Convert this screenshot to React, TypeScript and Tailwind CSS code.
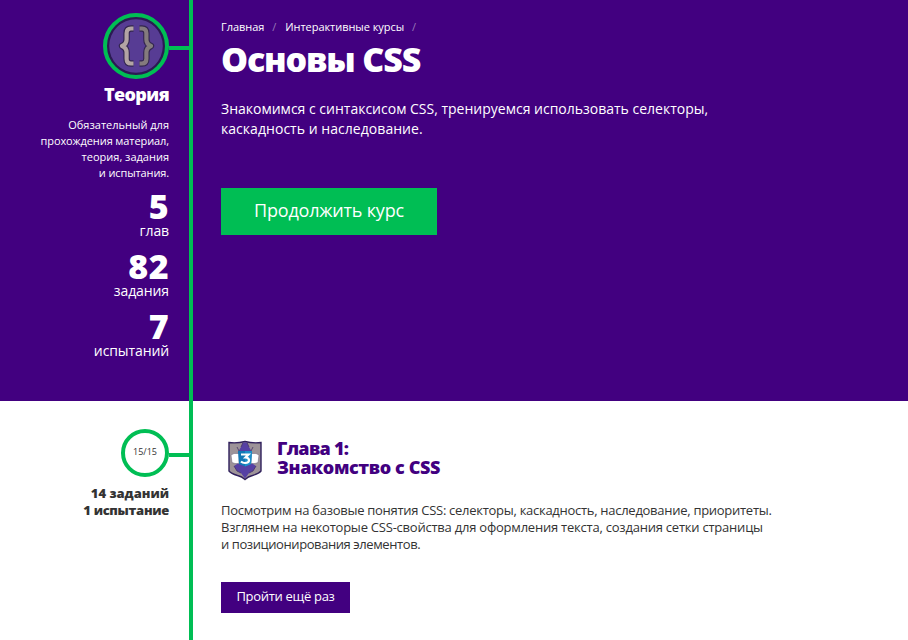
function BracesBadge() {
  return (
    <svg width="66" height="66" viewBox="0 0 66 66" className="block shrink-0">
      <circle cx="33" cy="33" r="31" fill="#2b1a52" stroke="#00be54" strokeWidth="4" />
      <circle cx="33" cy="33" r="26.8" fill="#573c94" />
      <g fill="none" strokeLinejoin="round" transform="translate(.5 0)">
        <g stroke="#33264f" strokeWidth="6.4">
          <path d="M30 15.500h-2.500c-3 0-4.400 1.800-4.400 4.700v6.300c0 3.200-1.700 5.300-4.600 6.500c2.900 1.200 4.600 3.300 4.600 6.500v6.300c0 2.900 1.400 4.700 4.400 4.700h2.500" />
          <path d="M36 15.500h2.500c3 0 4.400 1.800 4.400 4.700v6.300c0 3.200 1.700 5.300 4.600 6.500c-2.900 1.200-4.600 3.300-4.600 6.500v6.300c0 2.900-1.400 4.700-4.400 4.700h-2.500" />
        </g>
        <path stroke="#b3a4a4" strokeWidth="4.2" d="M30 15.500h-2.500c-3 0-4.400 1.800-4.400 4.700v6.300c0 3.200-1.700 5.300-4.600 6.500c2.900 1.200 4.600 3.300 4.600 6.500v6.300c0 2.900 1.400 4.700 4.400 4.700h2.500" />
        <path stroke="#847b7d" strokeWidth="4.2" d="M36 15.500h2.500c3 0 4.400 1.800 4.400 4.700v6.300c0 3.200 1.700 5.300 4.600 6.500c-2.900 1.200-4.600 3.300-4.600 6.500v6.300c0 2.900-1.400 4.700-4.400 4.700h-2.500" />
      </g>
    </svg>
  );
}

function ChapterShield() {
  return (
    <svg width="36" height="42" viewBox="0 0 36 42" className="block shrink-0">
      <path d="M2 3.500Q10 4.500 18 2.500Q26 4.500 34 3.500V32Q32 34.500 25.500 36.500Q21 37.500 18 40.500Q15 37.500 10.500 36.500Q4 34.500 2 32Z" fill="#9d9398" stroke="#30205c" strokeWidth="1.400" />
      <path d="M16 3.500L14 8L11 13L10 25L7 27L10 32L14 34L18 39.500L22 34L26 32L29 27L26 25L25 13L22 8L20 3.500Z" fill="#5640a4" />
      <path d="M16 3.500L14 8M20 3.500L22 8M10 8L12 12M26 8L24 12M7 27L10 32L14 34M29 27L26 32L22 34" fill="none" stroke="#453368" strokeWidth=".8" />
      <path d="M4 16L7 14.500H12V24.500H8L5 23.500ZM32 16L29 14.500H24V24.500H28L31 23.500Z" fill="#fff" stroke="#6b6079" strokeWidth=".5" />
      <path d="M11 12H25L24 25L18 27.500L12 25Z" fill="#1278b5" />
      <path d="M18 12H25L24 25L18 27.500Z" fill="#1e8fca" />
      <path d="M14 15.500H21.500L18.500 18.500Q22 18.500 22 21.300Q22 24 18 24Q15.500 24 14 22.500" fill="none" stroke="#fff" strokeWidth="2.200" />
    </svg>
  );
}

function Stat({ value, label }: { value: string; label: string }) {
  return (
    <div className="h-[60px]">
      <div className="text-[34px] leading-[35px] font-extrabold tracking-[0.4px]">{value}</div>
      <div className="text-[14px] leading-[13px] tracking-[-0.1px]">{label}</div>
    </div>
  );
}

export default function App() {
  return (
    <div className="h-[640px] w-[908px] overflow-hidden bg-white font-['Open_Sans','Noto_Sans',sans-serif] whitespace-nowrap text-[#333]">
      <section className="flex h-[401px] bg-[#420080] text-white">
        <aside className="w-[189px] pt-[13px] text-right">
          <div className="flex items-center justify-end">
            <BracesBadge />
            <div className="mt-[4px] h-1 w-5 bg-[#00be54]" />
          </div>
          <div className="pr-5">
            <h2 className="mt-[3px] text-[18px] leading-[24px] font-extrabold tracking-[-0.6px]">Теория</h2>
            <p className="mt-[11px] text-[11px] leading-[16px]">
              Обязательный для<br />
              <span className="tracking-[-0.1px]">прохождения материал,</span><br />
              теория, задания<br />
              <span className="tracking-[-0.12px]">и испытания.</span>
            </p>
            <div className="mt-[8px]">
              <Stat value="5" label="глав" />
              <Stat value="82" label="задания" />
              <Stat value="7" label="испытаний" />
            </div>
          </div>
        </aside>
        <div className="w-1 bg-[#00be54]" />
        <main className="flex-1 pt-5 pl-7">
          <nav className="flex text-[11px] leading-[14px] tracking-[-0.05px]">
            <a>Главная</a>
            <span className="mr-[9px] ml-[8px] text-[#9878b8]">/</span>
            <a>Интерактивные курсы</a>
            <span className="mx-[8px] text-[#9878b8]">/</span>
          </nav>
          <h1 className="mt-[5px] text-[34px] leading-[40px] font-extrabold tracking-[-1.15px]">Основы CSS</h1>
          <p className="mt-[20px] text-[14px] leading-[20px]">
            Знакомимся с синтаксисом CSS, тренируемся использовать селекторы,<br />
            <span className="tracking-[0.04px]">каскадность и наследование.</span>
          </p>
          <a className="mt-[49px] flex h-[47px] w-[216px] items-center justify-center bg-[#00be54] pb-[3px] text-[18px] font-medium tracking-[-0.2px]">Продолжить курс</a>
        </main>
      </section>

      <section className="flex h-[239px]">
        <aside className="w-[189px] pt-7 text-right">
          <div className="flex items-center justify-end">
            <div className="flex h-12 w-12 items-center justify-center rounded-full border-4 border-[#00be54] pb-[2px] text-[9px]">15/15</div>
            <div className="mt-[4px] h-1 w-5 bg-[#00be54]" />
          </div>
          <p className="mt-[8px] pr-5 text-[13px] leading-[17px] font-extrabold">
            14 заданий<br />
            <span className="tracking-[-0.3px]">1 испытание</span>
          </p>
        </aside>
        <div className="w-1 bg-[#00be54]" />
        <main className="flex-1 pt-[38px] pl-7">
          <header className="flex pl-[6px]">
            <ChapterShield />
            <h2 className="ml-[14px] text-[18px] leading-[19px] font-extrabold text-[#420080]">
              <span className="tracking-[-0.7px]">Глава 1:</span><br />
              <span className="tracking-[-0.38px]">Знакомство с CSS</span>
            </h2>
          </header>
          <p className="mt-[21px] text-[13px] leading-[17px]">
            <span className="tracking-[-0.28px]">Посмотрим на базовые понятия CSS: селекторы, каскадность, наследование, приоритеты.</span><br />
            <span className="tracking-[-0.225px]">Взглянем на некоторые CSS-свойства для оформления текста, создания сетки страницы</span><br />
            <span className="tracking-[-0.42px]">и позиционирования элементов.</span>
          </p>
          <a className="mt-[29px] flex h-[31px] w-[129px] items-center justify-center bg-[#420080] pb-[1px] text-[13px] tracking-[-0.3px] text-white">Пройти ещё раз</a>
        </main>
      </section>
    </div>
  );
}
